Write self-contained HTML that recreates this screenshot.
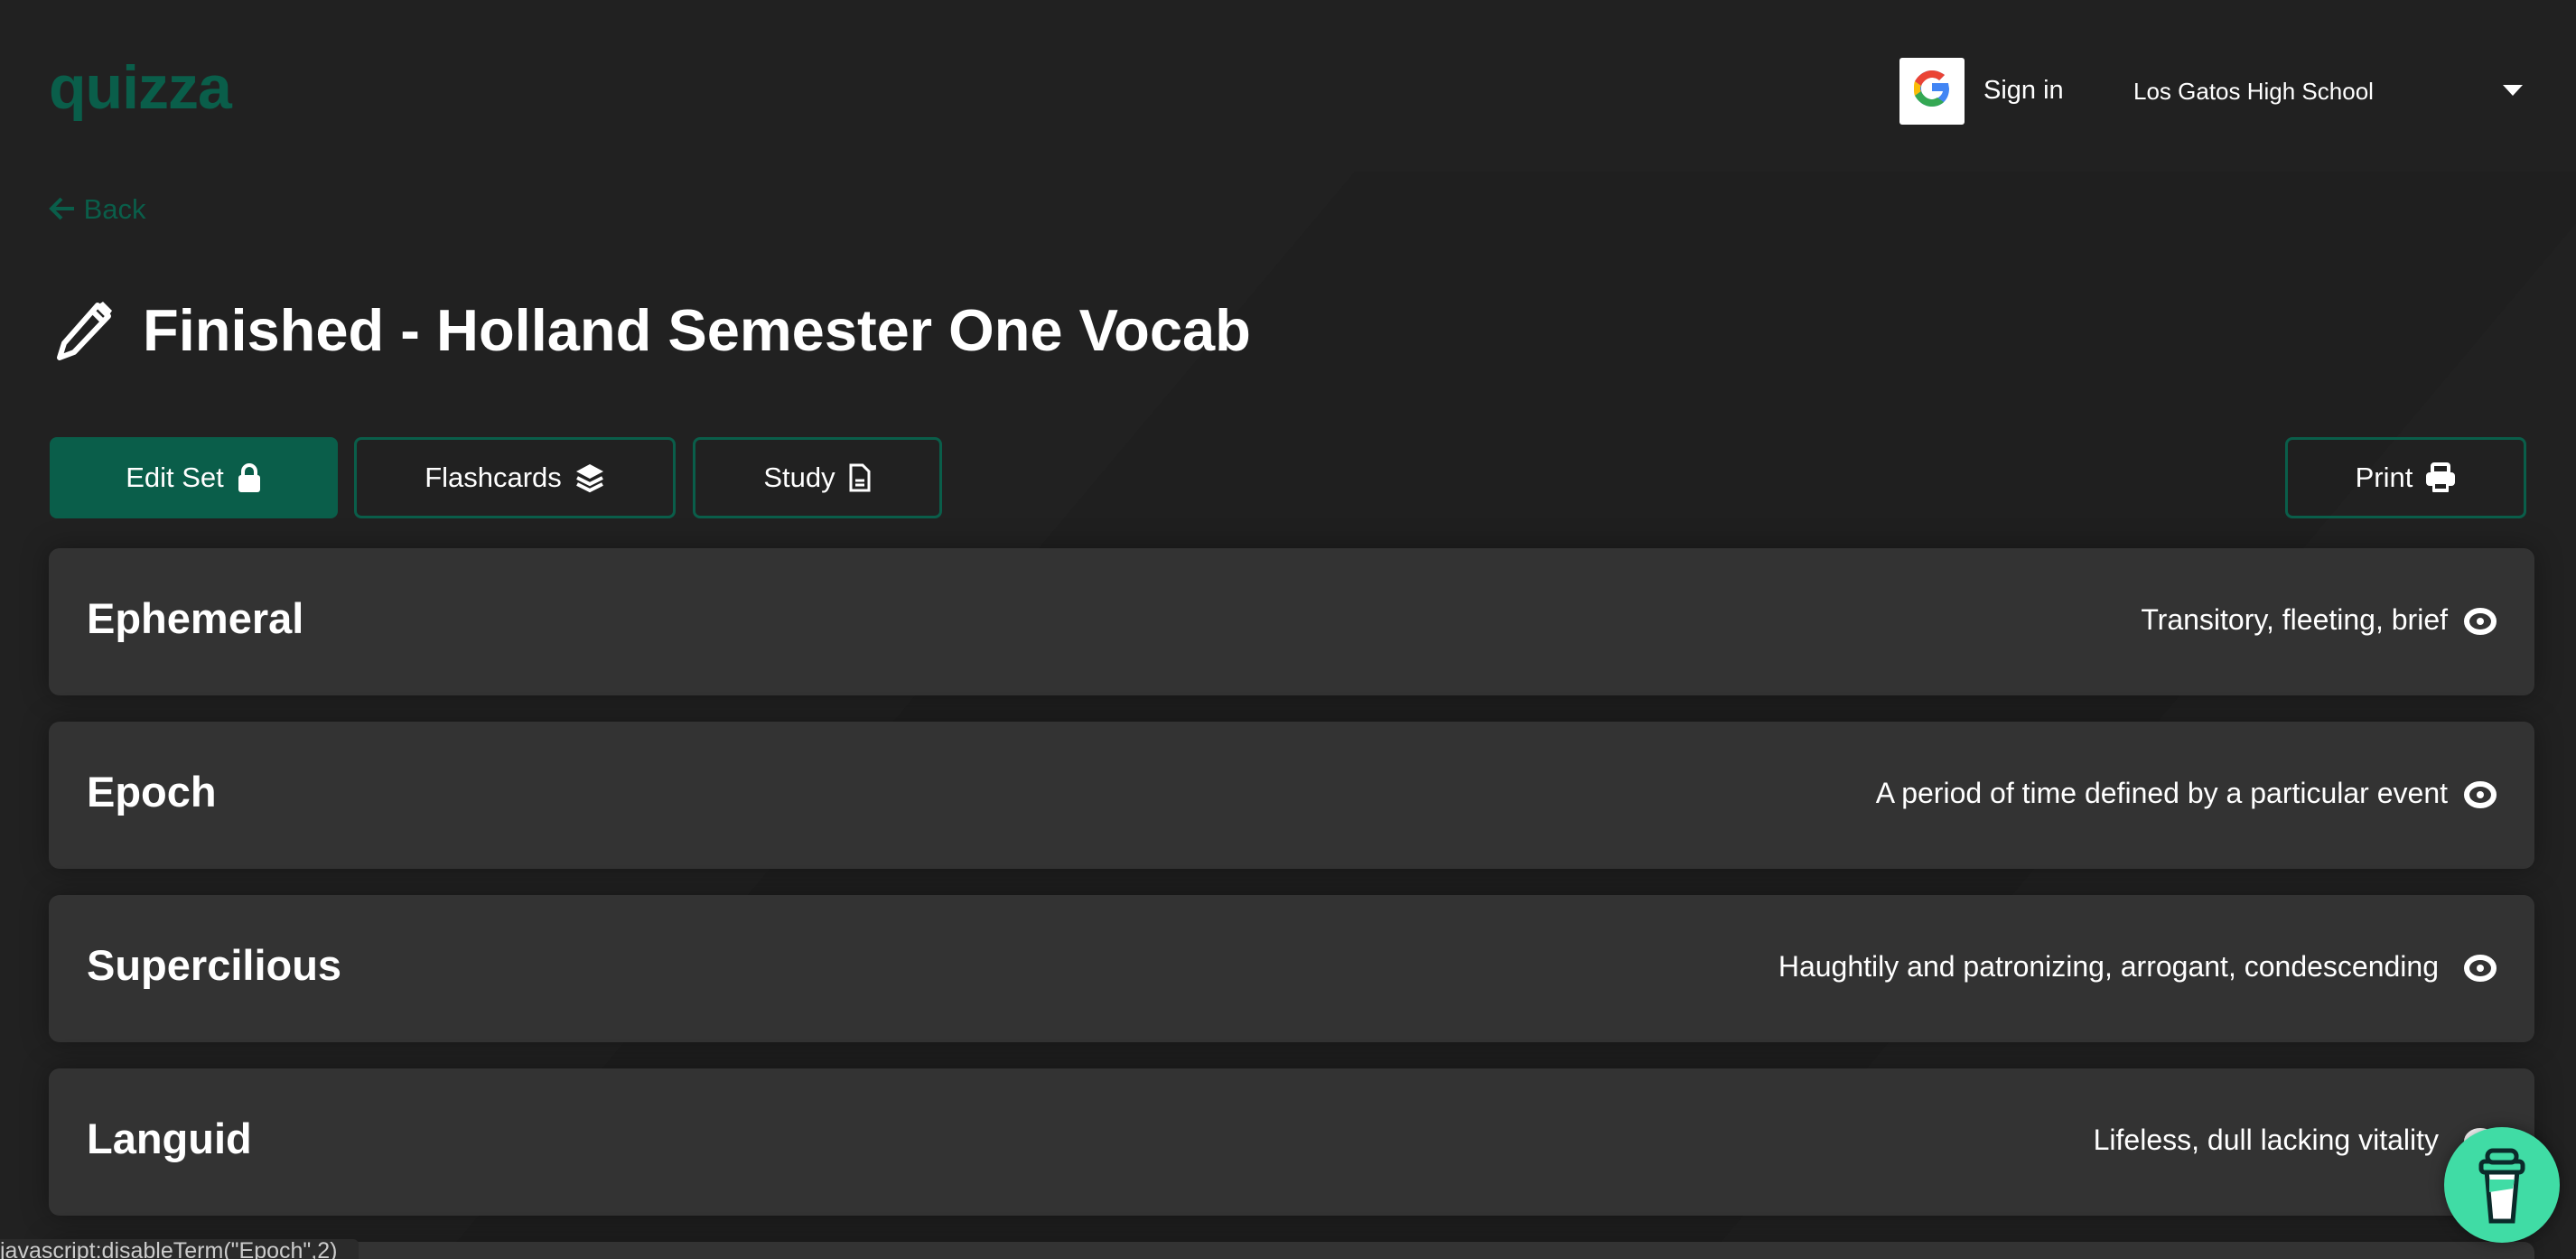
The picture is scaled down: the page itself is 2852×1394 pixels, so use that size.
<!DOCTYPE html>
<html><head><meta charset="utf-8"><style>
*{margin:0;padding:0;box-sizing:border-box}
html,body{width:2852px;height:1394px;overflow:hidden;background:#212121}
#w{position:relative;width:2852px;height:1394px;overflow:hidden;background:#212121;font-family:"Liberation Sans",sans-serif;color:#fff}
.bgshape{position:absolute;left:1500px;top:190px;width:1400px;height:1300px;background:#1f1f1f;transform:skewX(-40deg);transform-origin:top left}
.logo{position:absolute;left:54px;top:58px;font-size:68px;font-weight:bold;color:#0a5e4a;letter-spacing:-1px}
.gbox{position:absolute;left:2103px;top:64px;width:72px;height:74px;background:#fff;border-radius:3px}
.signin{position:absolute;left:2196px;top:84px;font-size:29px}
.school{position:absolute;left:2362px;top:86px;font-size:26px}
.tri{position:absolute;left:2771px;top:94px;width:0;height:0;border-left:11px solid transparent;border-right:11px solid transparent;border-top:12px solid #fff}
.back{position:absolute;left:54px;top:214px;font-size:31px;color:#0a5e4a}
.title{position:absolute;left:158px;top:328px;font-size:65px;font-weight:bold}
.btn{position:absolute;top:484px;height:90px;border:3px solid #0a5e4a;border-radius:8px;display:flex;align-items:center;justify-content:center;font-size:31px;gap:14px}
.card{position:absolute;left:54px;width:2752px;height:163px;background:#333;border-radius:12px;box-shadow:0 0 30px rgba(0,0,0,.35)}
.term{position:absolute;left:42px;top:50px;font-size:47px;font-weight:bold}
.def{position:absolute;right:96px;top:61px;font-size:32px}
.eye{position:absolute;right:42px;top:66px}
.status{position:absolute;left:0;top:1372px;width:397px;height:22px;background:#2b2b2b;color:#ccc;font-size:25px;line-height:26px;border-top-right-radius:6px;white-space:nowrap;overflow:hidden}
.coffee{position:absolute;left:2706px;top:1248px;width:128px;height:128px;border-radius:50%;background:#40dca5;box-shadow:0 0 16px rgba(0,0,0,.4)}
</style></head><body><div id="w">
<div class="bgshape"></div>
<div class="logo">quizza</div>
<div class="gbox"><svg width="72" height="74" viewBox="0 0 72 74"><path d="M36 28v9h12c-1 5-6 9-12 9-7 0-12-5-12-12s5-12 12-12c3 0 6 1 8 3l6-6c-4-3-9-5-14-5-11 0-20 9-20 20s9 20 20 20c10 0 19-7 19-20l-1-6z" fill="#4285f4"/><path d="M17 26l7 5c2-5 7-9 12-9 3 0 6 1 8 3l6-6c-4-3-9-5-14-5-8 0-15 5-19 12z" fill="#ea4335"/><path d="M16 34c0 3 0 6 1 8l7-5c-1-1-1-2-1-3s0-2 1-3l-7-5c-1 2-1 5-1 8z" fill="#fbbc05"/><path d="M36 54c5 0 10-2 13-5l-7-5c-2 1-4 2-6 2-5 0-10-4-12-9l-7 5c4 7 11 12 19 12z" fill="#34a853"/></svg></div>
<div class="signin">Sign in</div>
<div class="school">Los Gatos High School</div>
<div class="tri"></div>
<div class="back"><svg width="30" height="28" viewBox="0 0 30 28" style="vertical-align:-3px"><path d="M28 14H4M14 3L3 14l11 11" fill="none" stroke="#0a5e4a" stroke-width="4"/></svg> Back</div>
<svg style="position:absolute;left:56px;top:334px" width="70" height="68" viewBox="0 0 70 68"><path d="M52 4l12 12-38 40-16 6 5-16z" fill="none" stroke="#fff" stroke-width="6" stroke-linejoin="round"/><path d="M46 10l12 12" stroke="#fff" stroke-width="6"/><path d="M52 4l12 12 4-6-10-10z" fill="#fff"/></svg>
<div class="title">Finished - Holland Semester One Vocab</div>
<div class="btn" style="left:55px;width:319px;background:#0a5e4a">Edit Set <svg width="28" height="32" viewBox="0 0 28 32"><path d="M7 14V9a7 7 0 0114 0v5" fill="none" stroke="#fff" stroke-width="4"/><rect x="2" y="13" width="24" height="19" rx="3" fill="#fff"/></svg></div>
<div class="btn" style="left:392px;width:356px">Flashcards <svg width="34" height="34" viewBox="0 0 34 34"><path d="M17 2l15 8-15 8-15-8z" fill="#fff"/><path d="M3 17l14 7 14-7M3 24l14 7 14-7" fill="none" stroke="#fff" stroke-width="4"/></svg></div>
<div class="btn" style="left:767px;width:276px">Study <svg width="26" height="34" viewBox="0 0 26 34"><path d="M3 3h13l7 7v21H3z" fill="none" stroke="#fff" stroke-width="3"/><path d="M8 20h10M8 25h10" stroke="#fff" stroke-width="3"/></svg></div>
<div class="btn" style="left:2530px;width:267px">Print <svg width="34" height="34" viewBox="0 0 34 34"><rect x="8" y="2" width="18" height="10" rx="2" fill="none" stroke="#fff" stroke-width="4"/><rect x="1" y="11" width="32" height="15" rx="4" fill="#fff"/><rect x="8" y="22" width="18" height="11" rx="1" fill="#fff"/><rect x="11" y="24" width="12" height="5" fill="#212121"/></svg></div>

<div class="card" style="top:607px"><div class="term">Ephemeral</div><div class="def">Transitory, fleeting, brief</div><svg class="eye" width="36" height="30" viewBox="0 0 36 30"><ellipse cx="18" cy="15" rx="15" ry="12" fill="none" stroke="#fff" stroke-width="6"/><circle cx="18" cy="15" r="4" fill="#fff"/></svg></div>
<div class="card" style="top:799px"><div class="term">Epoch</div><div class="def">A period of time defined by a particular event</div><svg class="eye" width="36" height="30" viewBox="0 0 36 30"><ellipse cx="18" cy="15" rx="15" ry="12" fill="none" stroke="#fff" stroke-width="6"/><circle cx="18" cy="15" r="4" fill="#fff"/></svg></div>
<div class="card" style="top:991px"><div class="term">Supercilious</div><div class="def" style="right:106px">Haughtily and patronizing, arrogant, condescending</div><svg class="eye" width="36" height="30" viewBox="0 0 36 30"><ellipse cx="18" cy="15" rx="15" ry="12" fill="none" stroke="#fff" stroke-width="6"/><circle cx="18" cy="15" r="4" fill="#fff"/></svg></div>
<div class="card" style="top:1183px"><div class="term">Languid</div><div class="def" style="right:106px">Lifeless, dull lacking vitality</div><svg class="eye" width="36" height="30" viewBox="0 0 36 30"><ellipse cx="18" cy="15" rx="15" ry="12" fill="none" stroke="#fff" stroke-width="6"/><circle cx="18" cy="15" r="4" fill="#fff"/></svg></div>
<div class="card" style="top:1375px;height:19px;border-bottom-left-radius:0;border-bottom-right-radius:0"></div>

<div class="coffee"><svg width="128" height="128" viewBox="0 0 128 128"><path d="M47 48l5 56h24l5-56" fill="#fff" stroke="#0b2a2a" stroke-width="5"/><path d="M50 58h28l-2 10-26 4z" fill="#40dca5"/><rect x="41" y="38" width="46" height="12" rx="4" fill="#40dca5" stroke="#0b2a2a" stroke-width="5"/><rect x="48" y="26" width="32" height="13" rx="6" fill="#40dca5" stroke="#0b2a2a" stroke-width="5"/></svg></div>
<div class="status">javascript:disableTerm("Epoch",2)</div>
</div></body></html>
